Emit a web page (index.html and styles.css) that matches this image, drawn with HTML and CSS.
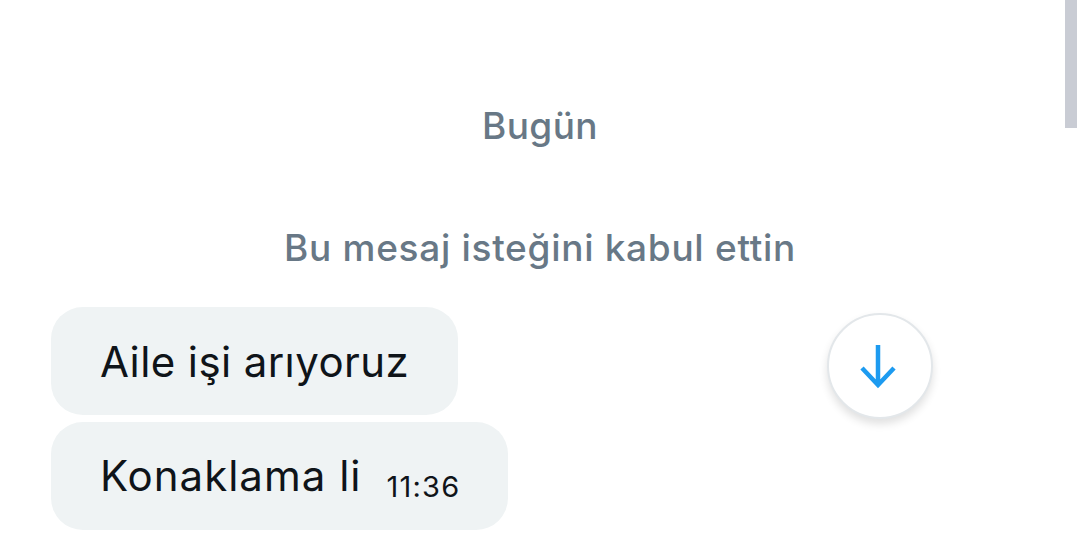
FILE: index.html
```html
<!DOCTYPE html>
<html lang="tr">
<head>
<meta charset="utf-8">
<link rel="stylesheet" href="styles.css">
</head>
<body>
<div class="screen">
  <div class="day">Bugün</div>
  <div class="notice">Bu mesaj isteğini kabul ettin</div>
  <div class="messages">
    <div class="bubble">Aile işi arıyoruz</div>
    <div class="bubble last"><span class="text">Konaklama li</span><span class="time">11:36</span></div>
  </div>
  <button class="scroll-down" aria-label="Aşağı kaydır">
    <svg width="40" height="48" viewBox="0 0 40 48"><path d="M18 3 V43 M2 26 L18 43 L34 26" fill="none" stroke="#1d9bf0" stroke-width="4.5" stroke-linecap="butt" stroke-linejoin="miter"/></svg>
  </button>
  <div class="scrollbar"></div>
</div>
</body>
</html>
```
FILE: styles.css
```css
html, body {
  margin: 0;
  padding: 0;
  background: #ffffff;
}
.screen {
  position: relative;
  width: 1080px;
  height: 538px;
  overflow: hidden;
  font-family: "Inter", "Noto Sans", sans-serif;
  display: flex;
  flex-direction: column;
}
.day {
  margin-top: 103px;
  height: 46px;
  line-height: 46px;
  text-align: center;
  font-size: 37px;
  font-weight: 500;
  letter-spacing: 0.4px;
  color: #687886;
}
.notice {
  margin-top: 76px;
  height: 46px;
  line-height: 46px;
  text-align: center;
  font-size: 37px;
  font-weight: 500;
  letter-spacing: 0.7px;
  color: #687886;
}
.messages {
  margin-top: 36px;
  padding-left: 51px;
  display: flex;
  flex-direction: column;
  align-items: flex-start;
  gap: 7px;
}
.bubble {
  height: 108px;
  box-sizing: border-box;
  padding: 0 49px;
  border-radius: 32px;
  background: #eff3f4;
  color: #0f1419;
  font-size: 42px;
  letter-spacing: 0.4px;
  display: flex;
  align-items: center;
}
.bubble.last {
  align-items: baseline;
  padding-top: 14px;
  line-height: 80px;
  padding-right: 48px;
}
.text {
  letter-spacing: 1px;
}
.time {
  font-size: 29px;
  letter-spacing: 1.2px;
  margin-left: 25px;
  position: relative;
  top: 6px;
}
.scroll-down {
  position: absolute;
  left: 827px;
  top: 313px;
  width: 106px;
  height: 106px;
  border-radius: 50%;
  background: #ffffff;
  border: 2px solid #e3e7ea;
  box-shadow: 0 5px 8px rgba(0, 0, 0, 0.12);
  padding: 0;
  display: flex;
  align-items: center;
  justify-content: center;
}
.scroll-down svg {
  display: block;
}
.scrollbar {
  position: absolute;
  right: 3px;
  top: 0;
  width: 12px;
  height: 128px;
  background: #c9ccd4;
}
```
